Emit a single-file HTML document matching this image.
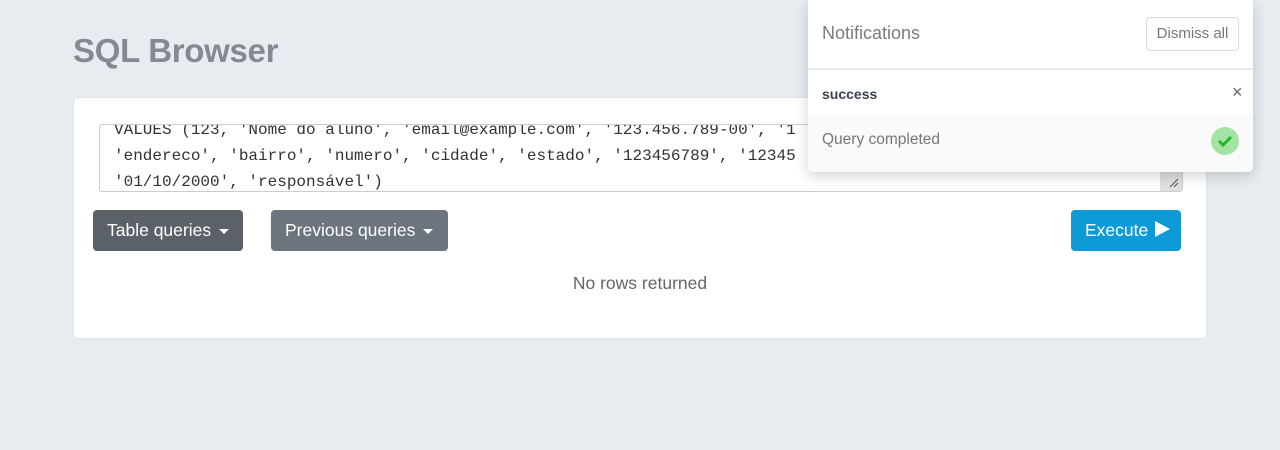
<!DOCTYPE html>
<html><head><meta charset="utf-8"><style>
*{box-sizing:border-box;margin:0;padding:0}
body{width:1280px;height:450px;overflow:hidden;background:#e6ecf0;font-family:"Liberation Sans",sans-serif;position:relative}
.title{position:absolute;left:73px;top:32px;font-size:33px;font-weight:bold;color:#838a93;letter-spacing:-0.3px}
.card{position:absolute;left:73px;top:97px;width:1134px;height:242px;background:#fff;border:1px solid #dde2e7;border-radius:4px}
.ta{position:absolute;left:99px;top:124px;width:1084px;height:68px;border:1px solid #c8cdd2;border-radius:3px;overflow:hidden;font-family:"Liberation Mono",monospace;font-size:16px;color:#333;line-height:26px;padding-left:14px}
.ta div{white-space:nowrap}
.grip{position:absolute;right:0;bottom:0;width:22px;height:20px;background:#e0e0e0}
.btn{position:absolute;top:210px;height:41px;border-radius:4px;color:#fff;font-size:17.5px;line-height:41px;padding-left:14px}
.caret{display:inline-block;width:0;height:0;border-left:5px solid transparent;border-right:5px solid transparent;border-top:5px solid #fff;vertical-align:middle;margin-left:8px}
.nr{position:absolute;left:0;width:1280px;text-align:center;top:273px;font-size:17.5px;color:#666}
.np{position:absolute;left:808px;top:0;width:445px;height:172px;background:#fff;border-radius:0 0 5px 5px;box-shadow:0 4px 14px rgba(0,0,0,.18)}
</style></head><body>
<div class="title">SQL Browser</div>
<div class="card"></div>
<div class="ta">
<div style="margin-top:-8px">VALUES (123, 'Nome do aluno', 'email@example.com', '123.456.789-00', '1</div>
<div>'endereco', 'bairro', 'numero', 'cidade', 'estado', '123456789', '12345</div>
<div>'01/10/2000', 'responsável')</div>
<div class="grip"><svg width="22" height="20"><path d="M10 16l8-8M14 16l4-4" stroke="#555" stroke-width="1"/></svg></div>
</div>
<div class="btn" style="left:93px;width:150px;background:#5a6169">Table queries<span class="caret"></span></div>
<div class="btn" style="left:271px;width:177px;background:#6c757d">Previous queries<span class="caret"></span></div>
<div class="btn" style="left:1071px;width:110px;background:#0d9ad6">Execute <svg width="18" height="18" style="vertical-align:-2px"><path d="M2 1L17 9L2 17Z" fill="#fff"/></svg></div>
<div class="nr">No rows returned</div>
<div class="np">
<div style="position:absolute;left:14px;top:23px;font-size:18px;color:#7c7c7c">Notifications</div>
<div style="position:absolute;left:338px;top:17px;width:93px;height:34px;border:1px solid #d8dde2;border-radius:4px;font-size:15px;color:#777;text-align:center;line-height:32px">Dismiss all</div>
<div style="position:absolute;left:0;top:68px;width:445px;height:2px;background:#e6ecf0"></div>
<div style="position:absolute;left:14px;top:86px;font-size:14px;font-weight:bold;color:#3a4450">success</div>
<div style="position:absolute;left:424px;top:82px;font-size:18px;color:#666">×</div>
<div style="position:absolute;left:0;top:115px;width:445px;height:57px;background:#fafafa;border-radius:0 0 5px 5px"></div>
<div style="position:absolute;left:14px;top:131px;font-size:15.5px;color:#777">Query completed</div>
<svg style="position:absolute;left:403px;top:127px" width="28" height="28"><circle cx="14" cy="14" r="14" fill="#a3e3a3"/><path d="M8 14l4 4 8-8" stroke="#22b722" stroke-width="3" fill="none"/></svg>
</div>
</body></html>
